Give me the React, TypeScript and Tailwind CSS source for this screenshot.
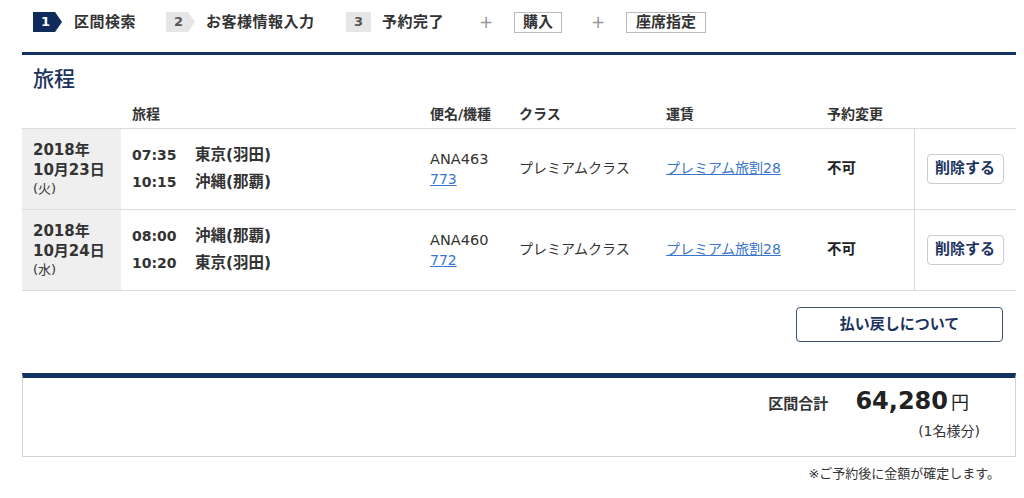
import React from "react";

const font = { fontFamily: '"DejaVu Sans", "Noto Sans CJK JP", sans-serif' };

function Badge({ n, active, arrow }: { n: string; active?: boolean; arrow?: boolean }) {
  return (
    <div
      className={
        (active ? "bg-[#0f2b5b] text-white " : "bg-[#e6e6e6] text-[#555] ") +
        (arrow ? "w-[29px] [clip-path:polygon(0_0,76%_0,100%_50%,76%_100%,0_100%)] " : "w-[25px] ") +
        "h-[20px] pl-[8px] flex items-center text-[13px] font-bold shrink-0"
      }
    >
      {n}
    </div>
  );
}

const rows = [
  {
    y: "2018年",
    md: "10月23日",
    dw: "(火)",
    t1: "07:35",
    p1: "東京(羽田)",
    t2: "10:15",
    p2: "沖縄(那覇)",
    fl: "ANA463",
    eq: "773",
  },
  {
    y: "2018年",
    md: "10月24日",
    dw: "(水)",
    t1: "08:00",
    p1: "沖縄(那覇)",
    t2: "10:20",
    p2: "東京(羽田)",
    fl: "ANA460",
    eq: "772",
  },
];

export default function App() {
  return (
    <div style={font} className="w-[1024px] h-[498px] bg-white text-[#333] overflow-hidden">
      <div className="ml-[22px] w-[994px]">
        {/* Steps */}
        <div className="flex items-center h-[43px] pl-[11px] pt-[1px]">
          <div className="w-[133px] flex items-center">
            <Badge n="1" active arrow />
            <span className="ml-[12px] text-[15px] tracking-[0.5px] font-bold text-[#333]">区間検索</span>
          </div>
          <div className="w-[180px] flex items-center">
            <Badge n="2" arrow />
            <span className="ml-[11px] text-[15px] tracking-[0.5px] font-bold text-[#333]">お客様情報入力</span>
          </div>
          <div className="w-[133px] flex items-center">
            <Badge n="3" />
            <span className="ml-[11px] text-[15px] tracking-[0.5px] font-bold text-[#333]">予約完了</span>
          </div>
          <span className="w-[35px] text-[17px] text-[#999] leading-none">+</span>
          <span className="border border-[#bbb] h-[21px] w-[48px] flex items-center justify-center text-[15px] font-bold">購入</span>
          <span className="ml-[29px] w-[35px] text-[17px] text-[#999] leading-none">+</span>
          <span className="border border-[#bbb] h-[21px] w-[80px] flex items-center justify-center text-[15px] font-bold">座席指定</span>
        </div>
        <div className="mt-[9px] h-[3px] bg-[#14325f]" />

        {/* Heading */}
        <h2 className="mt-[11px] pl-[11px] text-[21px] leading-[26px] text-[#1b335e] font-medium">旅程</h2>

        {/* Table */}
        <table className="mt-[12px] w-full border-collapse table-fixed">
          <colgroup>
            <col className="w-[99px]" />
            <col className="w-[298px]" />
            <col className="w-[89px]" />
            <col className="w-[147px]" />
            <col className="w-[161px]" />
            <col className="w-[98px]" />
            <col className="w-[102px]" />
          </colgroup>
          <thead>
            <tr className="h-[24px] text-[14px] text-[#333] text-left align-top">
              <th />
              <th className="pl-[11px] font-bold">旅程</th>
              <th className="pl-[11px] font-bold whitespace-nowrap">便名/機種</th>
              <th className="pl-[11px] font-bold">クラス</th>
              <th className="pl-[11px] font-bold">運賃</th>
              <th className="pl-[11px] font-bold">予約変更</th>
              <th />
            </tr>
          </thead>
          <tbody className="border-t border-[#dcdcdc]">
            {rows.map((r, i) => (
              <tr key={i} className="h-[81px] border-b border-[#dcdcdc]">
                <td className="bg-[#efefef] pl-[11px] align-middle">
                  <div className="text-[15px] font-bold leading-[20px]">{r.y}</div>
                  <div className="text-[15px] font-bold leading-[20px]">{r.md}</div>
                  <div className="text-[13px] leading-[17px]">{r.dw}</div>
                </td>
                <td className="pl-[11px] align-middle">
                  <div className="flex items-baseline font-bold leading-[27px] whitespace-nowrap">
                    <span className="w-[63px] text-[14px]">{r.t1}</span>
                    <span className="text-[15.5px]">{r.p1}</span>
                  </div>
                  <div className="flex items-baseline font-bold leading-[27px] whitespace-nowrap">
                    <span className="w-[63px] text-[14px]">{r.t2}</span>
                    <span className="text-[15.5px]">{r.p2}</span>
                  </div>
                </td>
                <td className="pl-[11px] align-middle text-[14px] leading-[20px]">
                  <div className="text-[14.5px]">{r.fl}</div>
                  <div className="text-[#3a76cc] underline">{r.eq}</div>
                </td>
                <td className="pl-[11px] align-middle text-[14px] whitespace-nowrap">プレミアムクラス</td>
                <td className="pl-[11px] align-middle text-[14px] text-[#3a76cc] underline whitespace-nowrap">プレミアム旅割28</td>
                <td className="pl-[11px] align-middle text-[14.5px] font-semibold text-[#222]">不可</td>
                <td className="pl-[12px] align-middle border-l border-[#dcdcdc]">
                  <button className="w-[77px] h-[30px] border border-[#ccc] rounded-[4px] bg-white text-[15px] font-bold text-[#1b335e] whitespace-nowrap">
                    削除する
                  </button>
                </td>
              </tr>
            ))}
          </tbody>
        </table>

        <div className="flex justify-end pr-[13px] mt-[16px]">
          <button className="w-[207px] h-[35px] border border-[#3e5272] rounded-[4px] bg-white text-[15px] font-bold text-[#1b335e]">
            払い戻しについて
          </button>
        </div>

        {/* Total */}
        <div className="mt-[31px] border-t-[5px] border-t-[#14325f] border-x border-b border-[#d4d4d4] h-[84px] flex justify-end pr-[35px] pt-[7px]">
          <div className="flex flex-col items-end">
            <div className="flex items-baseline mr-[11px] h-[32px]">
              <span className="text-[15px] font-bold mr-[27px]">区間合計</span>
              <span className="text-[24px] font-bold leading-[32px] text-[#222]">64,280</span>
              <span className="text-[18px] ml-[3px] text-[#222] leading-[32px]">円</span>
            </div>
            <div className="text-[14px] leading-[20px] mt-[4px]">(1名様分)</div>
          </div>
        </div>
        <div className="text-right text-[13px] pr-[16px] mt-[7px]">※ご予約後に金額が確定します。</div>
      </div>
    </div>
  );
}
